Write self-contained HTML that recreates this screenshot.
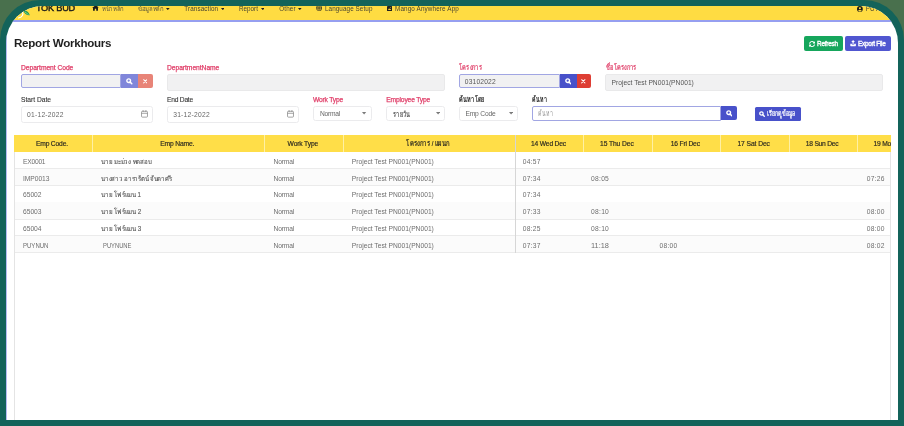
<!DOCTYPE html>
<html><head><meta charset="utf-8"><title>Report Workhours</title>
<style>
html,body{margin:0;padding:0;}
body{width:904px;height:426px;overflow:hidden;background:#49704d;font-family:"Liberation Sans",sans-serif;position:relative;}
#f{position:absolute;left:0;top:0;width:904px;height:426px;background:#13635a;border-radius:40px 40px 0 0;overflow:hidden}
#w{position:absolute;left:6px;top:5.75px;width:892px;height:414.25px;border-radius:37px 37px 0 0;overflow:hidden;background:#fff}
#r{will-change:transform;position:absolute;left:-6px;top:-5.75px;width:904px;height:426px;}
#r>div,#r>svg,.c>div,.c>svg{position:absolute;display:block}
.t{white-space:pre;}
svg text{font-family:"Liberation Sans",sans-serif;}
</style></head><body><div id="f"><div id="w"><div id="r">
<div style="left:0px;top:0px;width:904px;height:20.2px;background:#ffdc42"></div>
<div style="left:0px;top:19.9px;width:904px;height:2px;background:#969ff0"></div>
<svg style="left:14px;top:8px" width="18" height="12" viewBox="0 0 18 12"><path d="M9.5 2.5 C12 2 15 4 15.8 7.2 C13 7.6 10.2 5.8 9.5 2.5Z" fill="#1f9d55"/><path d="M11 4 L14.5 6.6" stroke="#d8f0c0" stroke-width="0.5" fill="none"/><path d="M8.3 3.8 C9.6 6 8.6 9.3 4.5 10" stroke="#fff" stroke-width="1.1" fill="none" stroke-linecap="round"/></svg>
<div class="t" style="left:35.90px;top:3px;font-size:9.2px;line-height:10px;color:#1a1a1a;letter-spacing:-0.232px;-webkit-text-stroke:0.4px #1a1a1a;">TOK BUD</div>
<svg style="left:92px;top:5.3px" width="7" height="5.8" viewBox="0 0 24 20"><path fill="#1a1a1a" d="M12 0.500L0.500 10.500H3.500V19.500H9.500V13H14.500V19.500H20.500V10.500H23.500L19 6.600V1.500H16V4Z"/></svg>
<svg role="img" aria-label="หน้าหลัก" style="left:101.60px;top:2.63px;overflow:visible" width="22.30" height="11.45" viewBox="0 -114.9 378.0 159.0" preserveAspectRatio="none"><text x="4" y="0" font-size="100" fill="#5e5738" textLength="366" lengthAdjust="spacingAndGlyphs">หน้าหลัก</text></svg>
<svg role="img" aria-label="ข้อมูลหลัก" style="left:138.00px;top:2.63px;overflow:visible" width="26.14" height="11.45" viewBox="0 -114.9 443.0 159.0" preserveAspectRatio="none"><text x="4" y="0" font-size="100" fill="#5e5738" textLength="431" lengthAdjust="spacingAndGlyphs">ข้อมูลหลัก</text></svg>
<svg style="left:166.00px;top:7.50px" width="3.6" height="2.16" viewBox="0 0 10 6"><path d="M0 0H10L5 6Z" fill="#222"/></svg>
<div class="t" style="left:184.30px;top:5px;font-size:6.3px;line-height:7px;color:#4a4530;letter-spacing:0.111px;">Transaction</div>
<svg style="left:220.70px;top:7.50px" width="3.6" height="2.16" viewBox="0 0 10 6"><path d="M0 0H10L5 6Z" fill="#222"/></svg>
<div class="t" style="left:239.00px;top:5px;font-size:6.3px;line-height:7px;color:#4a4530;letter-spacing:0.015px;">Report</div>
<svg style="left:260.90px;top:7.50px" width="3.6" height="2.16" viewBox="0 0 10 6"><path d="M0 0H10L5 6Z" fill="#222"/></svg>
<div class="t" style="left:279.20px;top:5px;font-size:6.3px;line-height:7px;color:#4a4530;letter-spacing:0.169px;">Other</div>
<svg style="left:298.20px;top:7.50px" width="3.6" height="2.16" viewBox="0 0 10 6"><path d="M0 0H10L5 6Z" fill="#222"/></svg>
<svg style="left:315.9px;top:5.2px" width="6.2" height="6.2" viewBox="0 0 20 20"><circle cx="10" cy="10" r="9.5" fill="#222"/><ellipse cx="10" cy="10" rx="4" ry="9" fill="none" stroke="#ffdc42" stroke-width="1.6"/><path d="M1 10H19M2.500 5.500H17.500M2.500 14.500H17.500" stroke="#ffdc42" stroke-width="1.500"/></svg>
<div class="t" style="left:325.00px;top:5px;font-size:6.3px;line-height:7px;color:#4a4530;letter-spacing:0.090px;">Language Setup</div>
<svg style="left:386.5px;top:5.6px" width="5.2" height="5.4" viewBox="0 0 20 20"><rect x="0" y="0" width="20" height="20" rx="3" fill="#222"/><path d="M4 15 L8 8 L11 12 L13 10 L16 15Z" fill="#ffdc42"/><circle cx="13" cy="6" r="1.800" fill="#ffdc42"/></svg>
<div class="t" style="left:395.00px;top:5px;font-size:6.3px;line-height:7px;color:#4a4530;letter-spacing:0.150px;">Mango Anywhere App</div>
<svg style="left:856.9px;top:5.8px" width="5.8" height="5.8" viewBox="0 0 20 20"><circle cx="10" cy="10" r="10" fill="#1c1c1c"/><circle cx="10" cy="7.500" r="3.600" fill="#ffdc42"/><path d="M3.500 16.500C5 12.500 15 12.500 16.500 16.500C14 19.500 6 19.500 3.500 16.500Z" fill="#ffdc42"/></svg>
<div class="t" style="left:865.70px;top:5px;font-size:6.3px;line-height:7px;color:#4a4530;">PUYNUN</div>
<div class="t" style="left:14.00px;top:36px;font-size:11.6px;line-height:13px;color:#1f1f1f;font-weight:700;letter-spacing:-0.270px;">Report Workhours</div>
<div style="left:804.1px;top:36px;width:38.8px;height:14.6px;background:#16a65c;border-radius:2px"></div>
<div style="left:845.2px;top:36px;width:45.6px;height:14.6px;background:#5056d0;border-radius:2px"></div>
<svg style="left:808.8px;top:40.5px" width="6.2" height="6.2" viewBox="0 0 512 512"><path fill="#fff" d="M370.700 133.300C339.500 104 298.900 88 255.800 88c-77.500.1-144.300 53.200-162.800 126.900-1.300 5.400-6.100 9.200-11.700 9.200H24.100c-7.500 0-13.200-6.800-11.800-14.200C33.900 94.900 134.800 8 256 8c66.400 0 126.800 26.100 171.300 68.700L463 41C478.100 25.900 504 36.600 504 57.900V192c0 13.300-10.700 24-24 24H345.900c-21.400 0-32.100-25.900-17-41l41.800-41.700zM32 296h134.100c21.400 0 32.100 25.900 17 41l-41.800 41.800c31.300 29.300 71.800 45.300 114.900 45.300 77.400-.1 144.300-53.100 162.800-126.800 1.300-5.400 6.100-9.200 11.700-9.200h57.300c7.500 0 13.200 6.800 11.800 14.200C478.100 417.100 377.200 504 256 504c-66.400 0-126.800-26.100-171.300-68.700L49 471c-15.100 15.100-41 4.400-41-16.900V320c0-13.300 10.700-24 24-24z"/></svg>
<div class="t" style="left:817.00px;top:40px;font-size:6.4px;line-height:7px;color:#fff;letter-spacing:-0.216px;-webkit-text-stroke:0.35px #fff;">Refresh</div>
<svg style="left:850px;top:40.4px" width="6.2" height="6.4" viewBox="0 0 20 20"><path fill="#fff" d="M10 0L4 6.500H8V12H12V6.500H16Z"/><path fill="#fff" d="M1 12H6V14H14V12H19V18.500a1.500 1.500 0 0 1-1.500 1.500H2.500a1.500 1.500 0 0 1-1.500-1.500Z"/></svg>
<div class="t" style="left:858.00px;top:40px;font-size:6.4px;line-height:7px;color:#fff;letter-spacing:-0.272px;-webkit-text-stroke:0.35px #fff;">Export File</div>
<div class="t" style="left:21.00px;top:64px;font-size:6.7px;line-height:7px;color:#e0406a;letter-spacing:-0.032px;-webkit-text-stroke:0.25px #e0406a;">Department Code</div>
<div class="t" style="left:167.00px;top:64px;font-size:6.7px;line-height:7px;color:#e0406a;letter-spacing:-0.034px;-webkit-text-stroke:0.25px #e0406a;">DepartmentName</div>
<svg role="img" aria-label="โครงการ" style="left:459.25px;top:60.74px;overflow:visible" width="23.30" height="12.40" viewBox="0 -114.9 395.0 159.0" preserveAspectRatio="none"><text x="2" y="0" font-size="100" fill="#e0406a" stroke="#e0406a" stroke-width="3" textLength="388" lengthAdjust="spacingAndGlyphs">โครงการ</text></svg>
<svg role="img" aria-label="ชื่อโครงการ" style="left:605.50px;top:60.74px;overflow:visible" width="30.86" height="12.40" viewBox="0 -114.9 523.0 159.0" preserveAspectRatio="none"><text x="4" y="0" font-size="100" fill="#e0406a" stroke="#e0406a" stroke-width="3" textLength="514" lengthAdjust="spacingAndGlyphs">ชื่อโครงการ</text></svg>
<div style="left:20.75px;top:74.4px;width:100.5px;height:14.05px;background:#f1f1f2;border:1px solid #a1a6e3;border-radius:2px 0 0 2px;box-sizing:border-box"></div>
<div style="left:121.25px;top:74.4px;width:16.75px;height:14.05px;background:#8086da"></div>
<div style="left:138px;top:74.4px;width:14.8px;height:14.05px;background:#e88478;border-radius:0 2px 2px 0"></div>
<svg style="left:126.10px;top:78.10px" width="6.6" height="6.6" viewBox="0 0 20 20"><circle cx="8.200" cy="8.200" r="5.600" fill="none" stroke="#fff" stroke-width="4.200"/><path d="M12.600 12.600L17.600 17.600" stroke="#fff" stroke-width="4.600" stroke-linecap="round"/></svg>
<svg style="left:142.90px;top:79.10px" width="4.6" height="4.6" viewBox="0 0 10 10"><path d="M1.500 1.500L8.500 8.500M8.500 1.500L1.500 8.500" stroke="#fff" stroke-width="2.200" stroke-linecap="round"/></svg>
<div style="left:167px;top:74.4px;width:277.5px;height:16.2px;background:#f1f1f2;border:1px solid #e9e9ea;border-radius:2px;box-sizing:border-box"></div>
<div style="left:459.25px;top:74.4px;width:100.85px;height:14.05px;background:#f1f1f2;border:1px solid #a1a6e3;border-radius:2px 0 0 2px;box-sizing:border-box"></div>
<div class="t" style="left:464.80px;top:78px;font-size:6.7px;line-height:7px;color:#555;letter-spacing:0.161px;">03102022</div>
<div style="left:560.1px;top:74.4px;width:16.6px;height:14.05px;background:#4851ca"></div>
<div style="left:576.7px;top:74.4px;width:14.2px;height:14.05px;background:#de3e34;border-radius:0 2px 2px 0"></div>
<svg style="left:564.90px;top:78.10px" width="6.6" height="6.6" viewBox="0 0 20 20"><circle cx="8.200" cy="8.200" r="5.600" fill="none" stroke="#fff" stroke-width="4.200"/><path d="M12.600 12.600L17.600 17.600" stroke="#fff" stroke-width="4.600" stroke-linecap="round"/></svg>
<svg style="left:581.10px;top:79.10px" width="4.6" height="4.6" viewBox="0 0 10 10"><path d="M1.500 1.500L8.500 8.500M8.500 1.500L1.500 8.500" stroke="#fff" stroke-width="2.200" stroke-linecap="round"/></svg>
<div style="left:605.3px;top:74.4px;width:278.2px;height:16.2px;background:#f1f1f2;border:1px solid #e9e9ea;border-radius:2px;box-sizing:border-box"></div>
<div class="t" style="left:611.60px;top:79px;font-size:6.7px;line-height:7px;color:#555;letter-spacing:0.009px;">Project Test PN001(PN001)</div>
<div class="t" style="left:21.00px;top:96px;font-size:6.7px;line-height:7px;color:#333;letter-spacing:-0.016px;-webkit-text-stroke:0.1px #333;">Start Date</div>
<div class="t" style="left:167.00px;top:96px;font-size:6.7px;line-height:7px;color:#333;letter-spacing:-0.242px;-webkit-text-stroke:0.1px #333;">End Date</div>
<div class="t" style="left:313.00px;top:96px;font-size:6.7px;line-height:7px;color:#e0406a;letter-spacing:-0.197px;-webkit-text-stroke:0.25px #e0406a;">Work Type</div>
<div class="t" style="left:386.25px;top:96px;font-size:6.7px;line-height:7px;color:#e0406a;letter-spacing:-0.159px;-webkit-text-stroke:0.25px #e0406a;">Employee Type</div>
<svg role="img" aria-label="ค้นหาโดย" style="left:459.25px;top:92.64px;overflow:visible" width="25.66" height="12.40" viewBox="0 -114.9 435.0 159.0" preserveAspectRatio="none"><text x="6" y="0" font-size="100" fill="#222" stroke="#222" stroke-width="3" textLength="422" lengthAdjust="spacingAndGlyphs">ค้นหาโดย</text></svg>
<svg role="img" aria-label="ค้นหา" style="left:532.00px;top:92.64px;overflow:visible" width="15.16" height="12.40" viewBox="0 -114.9 257.0 159.0" preserveAspectRatio="none"><text x="6" y="0" font-size="100" fill="#222" stroke="#222" stroke-width="3" textLength="243" lengthAdjust="spacingAndGlyphs">ค้นหา</text></svg>
<div style="left:20.75px;top:106.3px;width:132px;height:16.3px;background:#fff;border:1px solid #ebebed;border-radius:2.500px;box-sizing:border-box"></div>
<div class="t" style="left:27.00px;top:111px;font-size:6.7px;line-height:7px;color:#666;letter-spacing:0.248px;">01-12-2022</div>
<svg style="left:141.2px;top:110.3px" width="7" height="7.7" viewBox="0 0 20 21" preserveAspectRatio="none"><rect x="1.500" y="3.500" width="17" height="16" rx="2.500" fill="none" stroke="#808080" stroke-width="2"/><path d="M1.500 9H18.500M6 0.500V5M14 0.500V5" stroke="#808080" stroke-width="2"/></svg>
<div style="left:167px;top:106.3px;width:132px;height:16.3px;background:#fff;border:1px solid #ebebed;border-radius:2.500px;box-sizing:border-box"></div>
<div class="t" style="left:173.20px;top:111px;font-size:6.7px;line-height:7px;color:#666;letter-spacing:0.248px;">31-12-2022</div>
<svg style="left:287.4px;top:110.3px" width="7" height="7.7" viewBox="0 0 20 21" preserveAspectRatio="none"><rect x="1.500" y="3.500" width="17" height="16" rx="2.500" fill="none" stroke="#808080" stroke-width="2"/><path d="M1.500 9H18.500M6 0.500V5M14 0.500V5" stroke="#808080" stroke-width="2"/></svg>
<div style="left:313px;top:106.25px;width:59px;height:14.5px;background:#fff;border:1px solid #ebebed;border-radius:2.500px;box-sizing:border-box"></div>
<div class="t" style="left:320.00px;top:110px;font-size:6.7px;line-height:7px;color:#666;letter-spacing:-0.265px;">Normal</div>
<svg style="left:362.40px;top:112.30px" width="4.2" height="2.52" viewBox="0 0 10 6"><path d="M0 0H10L5 6Z" fill="#7a7a7a"/></svg>
<div style="left:386.25px;top:106.25px;width:58.75px;height:14.5px;background:#fff;border:1px solid #ebebed;border-radius:2.500px;box-sizing:border-box"></div>
<svg role="img" aria-label="รายวัน" style="left:392.60px;top:107.64px;overflow:visible" width="17.29" height="12.40" viewBox="0 -114.9 293.0 159.0" preserveAspectRatio="none"><text x="4" y="0" font-size="100" fill="#4a4a4a" stroke="#4a4a4a" stroke-width="2" textLength="286" lengthAdjust="spacingAndGlyphs">รายวัน</text></svg>
<svg style="left:435.60px;top:112.30px" width="4.2" height="2.52" viewBox="0 0 10 6"><path d="M0 0H10L5 6Z" fill="#7a7a7a"/></svg>
<div style="left:459.25px;top:106.25px;width:58.75px;height:14.5px;background:#fff;border:1px solid #ebebed;border-radius:2.500px;box-sizing:border-box"></div>
<div class="t" style="left:465.50px;top:110px;font-size:6.7px;line-height:7px;color:#666;letter-spacing:-0.207px;">Emp Code</div>
<svg style="left:508.60px;top:112.30px" width="4.2" height="2.52" viewBox="0 0 10 6"><path d="M0 0H10L5 6Z" fill="#7a7a7a"/></svg>
<div style="left:532px;top:106.25px;width:189px;height:14.25px;background:#fff;border:1px solid #a1a6e3;border-radius:2px 0 0 2px;box-sizing:border-box"></div>
<svg role="img" aria-label="ค้นหา" style="left:538.00px;top:107.24px;overflow:visible" width="15.16" height="12.40" viewBox="0 -114.9 257.0 159.0" preserveAspectRatio="none"><text x="6" y="0" font-size="100" fill="#999" textLength="243" lengthAdjust="spacingAndGlyphs">ค้นหา</text></svg>
<div style="left:720.75px;top:106.25px;width:16.2px;height:14.1px;background:#4851ca;border-radius:0 2px 2px 0"></div>
<svg style="left:725.80px;top:110.10px" width="6.6" height="6.6" viewBox="0 0 20 20"><circle cx="8.200" cy="8.200" r="5.600" fill="none" stroke="#fff" stroke-width="4.200"/><path d="M12.600 12.600L17.600 17.600" stroke="#fff" stroke-width="4.600" stroke-linecap="round"/></svg>
<div style="left:754.7px;top:106.5px;width:46.2px;height:14.3px;background:#4851ca;border-radius:1.500px"></div>
<svg style="left:759.20px;top:110.50px" width="6" height="6" viewBox="0 0 20 20"><circle cx="8.200" cy="8.200" r="5.600" fill="none" stroke="#fff" stroke-width="4.200"/><path d="M12.600 12.600L17.600 17.600" stroke="#fff" stroke-width="4.600" stroke-linecap="round"/></svg>
<svg role="img" aria-label="เรียกดูข้อมูล" style="left:767.25px;top:106.84px;overflow:visible" width="28.70" height="12.40" viewBox="0 -114.9 528.0 159.0" preserveAspectRatio="none"><text x="6" y="0" font-size="100" fill="#fff" stroke="#fff" stroke-width="3" textLength="514" lengthAdjust="spacingAndGlyphs">เรียกดูข้อมูล</text></svg>
<div class="c" style="left:0;top:0;width:891px;height:426px;overflow:hidden"><div style="left:14px;top:135.2px;width:877px;height:16.8px;background:#ffde48"></div>
<div style="left:92.2px;top:135.2px;width:1px;height:16.8px;background:#fff0a4"></div>
<div style="left:263.75px;top:135.2px;width:1px;height:16.8px;background:#fff0a4"></div>
<div style="left:343.0px;top:135.2px;width:1px;height:16.8px;background:#fff0a4"></div>
<div style="left:583.4px;top:135.2px;width:1px;height:16.8px;background:#fff0a4"></div>
<div style="left:651.8px;top:135.2px;width:1px;height:16.8px;background:#fff0a4"></div>
<div style="left:720.2px;top:135.2px;width:1px;height:16.8px;background:#fff0a4"></div>
<div style="left:788.6px;top:135.2px;width:1px;height:16.8px;background:#fff0a4"></div>
<div style="left:857.0px;top:135.2px;width:1px;height:16.8px;background:#fff0a4"></div>
<div class="t" style="left:35.95px;top:140px;font-size:6.7px;line-height:7px;color:#2f2c20;letter-spacing:-0.169px;-webkit-text-stroke:0.18px #2f2c20;">Emp Code.</div>
<div class="t" style="left:160.28px;top:140px;font-size:6.7px;line-height:7px;color:#2f2c20;letter-spacing:-0.152px;-webkit-text-stroke:0.18px #2f2c20;">Emp Name.</div>
<div class="t" style="left:287.62px;top:140px;font-size:6.7px;line-height:7px;color:#2f2c20;letter-spacing:-0.142px;-webkit-text-stroke:0.18px #2f2c20;">Work Type</div>
<svg role="img" aria-label="โครงการ / แผนก" style="left:405.65px;top:136.84px;overflow:visible" width="43.90" height="12.40" viewBox="0 -114.9 744.0 159.0" preserveAspectRatio="none"><text x="2" y="0" font-size="100" fill="#2f2c20" stroke="#2f2c20" stroke-width="3" textLength="734" lengthAdjust="spacingAndGlyphs">โครงการ / แผนก</text></svg>
<div class="t" style="left:531.05px;top:140px;font-size:6.7px;line-height:7px;color:#2f2c20;letter-spacing:-0.175px;-webkit-text-stroke:0.18px #2f2c20;">14 Wed Dec</div>
<div class="t" style="left:600.10px;top:140px;font-size:6.7px;line-height:7px;color:#2f2c20;letter-spacing:-0.091px;-webkit-text-stroke:0.18px #2f2c20;">15 Thu Dec</div>
<div class="t" style="left:670.70px;top:140px;font-size:6.7px;line-height:7px;color:#2f2c20;letter-spacing:-0.170px;-webkit-text-stroke:0.18px #2f2c20;">16 Fri Dec</div>
<div class="t" style="left:737.45px;top:140px;font-size:6.7px;line-height:7px;color:#2f2c20;letter-spacing:-0.065px;-webkit-text-stroke:0.18px #2f2c20;">17 Sat Dec</div>
<div class="t" style="left:805.85px;top:140px;font-size:6.7px;line-height:7px;color:#2f2c20;letter-spacing:-0.251px;-webkit-text-stroke:0.18px #2f2c20;">18 Sun Dec</div>
<div class="t" style="left:873.50px;top:140px;font-size:6.7px;line-height:7px;color:#2f2c20;letter-spacing:-0.212px;-webkit-text-stroke:0.18px #2f2c20;">19 Mon Dec</div>
<div style="left:14px;top:168.35px;width:877px;height:1px;background:#ebebeb"></div>
<div class="t" style="left:23.00px;top:158px;font-size:6.7px;line-height:7px;color:#6e6e6e;letter-spacing:-0.241px;">EX0001</div>
<svg role="img" aria-label="นาย มะม่วง ทดสอบ" style="left:100.80px;top:155.54px;overflow:visible" width="50.73" height="11.29" viewBox="0 -114.9 857.0 159.0" preserveAspectRatio="none"><text x="5" y="0" font-size="100" fill="#5a5a5a" stroke="#5a5a5a" stroke-width="2" textLength="845" lengthAdjust="spacingAndGlyphs">นาย มะม่วง ทดสอบ</text></svg>
<div class="t" style="left:273.50px;top:158px;font-size:6.7px;line-height:7px;color:#6e6e6e;letter-spacing:-0.140px;">Normal</div>
<div class="t" style="left:351.75px;top:158px;font-size:6.7px;line-height:7px;color:#6e6e6e;letter-spacing:0.003px;">Project Test PN001(PN001)</div>
<div class="t" style="left:522.80px;top:158px;font-size:6.7px;line-height:7px;color:#6e6e6e;letter-spacing:0.247px;">04:57</div>
<div style="left:14px;top:168.85px;width:877px;height:16.75px;background:#fbfbfb"></div>
<div style="left:14px;top:185.1px;width:877px;height:1px;background:#ebebeb"></div>
<div class="t" style="left:23.00px;top:175px;font-size:6.7px;line-height:7px;color:#6e6e6e;letter-spacing:-0.045px;">IMP0013</div>
<svg role="img" aria-label="นางสาว อารารัตน์ จันดาศรี" style="left:100.80px;top:172.54px;overflow:visible" width="70.57" height="11.29" viewBox="0 -114.9 1192.0 159.0" preserveAspectRatio="none"><text x="5" y="0" font-size="100" fill="#5a5a5a" stroke="#5a5a5a" stroke-width="2" textLength="1183" lengthAdjust="spacingAndGlyphs">นางสาว อารารัตน์ จันดาศรี</text></svg>
<div class="t" style="left:273.50px;top:175px;font-size:6.7px;line-height:7px;color:#6e6e6e;letter-spacing:-0.140px;">Normal</div>
<div class="t" style="left:351.75px;top:175px;font-size:6.7px;line-height:7px;color:#6e6e6e;letter-spacing:0.003px;">Project Test PN001(PN001)</div>
<div class="t" style="left:522.80px;top:175px;font-size:6.7px;line-height:7px;color:#6e6e6e;letter-spacing:0.247px;">07:34</div>
<div class="t" style="left:591.10px;top:175px;font-size:6.7px;line-height:7px;color:#6e6e6e;letter-spacing:0.247px;">08:05</div>
<div class="t" style="left:866.70px;top:175px;font-size:6.7px;line-height:7px;color:#6e6e6e;letter-spacing:0.247px;">07:26</div>
<div style="left:14px;top:201.85px;width:877px;height:1px;background:#ebebeb"></div>
<div class="t" style="left:23.00px;top:191px;font-size:6.7px;line-height:7px;color:#6e6e6e;letter-spacing:-0.026px;">65002</div>
<svg role="img" aria-label="นาย โฟร์แมน 1" style="left:100.80px;top:188.54px;overflow:visible" width="40.49" height="11.29" viewBox="0 -114.9 684.0 159.0" preserveAspectRatio="none"><text x="5" y="0" font-size="100" fill="#5a5a5a" stroke="#5a5a5a" stroke-width="2" textLength="668" lengthAdjust="spacingAndGlyphs">นาย โฟร์แมน 1</text></svg>
<div class="t" style="left:273.50px;top:191px;font-size:6.7px;line-height:7px;color:#6e6e6e;letter-spacing:-0.140px;">Normal</div>
<div class="t" style="left:351.75px;top:191px;font-size:6.7px;line-height:7px;color:#6e6e6e;letter-spacing:0.003px;">Project Test PN001(PN001)</div>
<div class="t" style="left:522.80px;top:191px;font-size:6.7px;line-height:7px;color:#6e6e6e;letter-spacing:0.247px;">07:34</div>
<div style="left:14px;top:202.35px;width:877px;height:16.75px;background:#fbfbfb"></div>
<div style="left:14px;top:218.6px;width:877px;height:1px;background:#ebebeb"></div>
<div class="t" style="left:23.00px;top:208px;font-size:6.7px;line-height:7px;color:#6e6e6e;letter-spacing:-0.026px;">65003</div>
<svg role="img" aria-label="นาย โฟร์แมน 2" style="left:100.80px;top:205.54px;overflow:visible" width="40.49" height="11.29" viewBox="0 -114.9 684.0 159.0" preserveAspectRatio="none"><text x="5" y="0" font-size="100" fill="#5a5a5a" stroke="#5a5a5a" stroke-width="2" textLength="673" lengthAdjust="spacingAndGlyphs">นาย โฟร์แมน 2</text></svg>
<div class="t" style="left:273.50px;top:208px;font-size:6.7px;line-height:7px;color:#6e6e6e;letter-spacing:-0.140px;">Normal</div>
<div class="t" style="left:351.75px;top:208px;font-size:6.7px;line-height:7px;color:#6e6e6e;letter-spacing:0.003px;">Project Test PN001(PN001)</div>
<div class="t" style="left:522.80px;top:208px;font-size:6.7px;line-height:7px;color:#6e6e6e;letter-spacing:0.247px;">07:33</div>
<div class="t" style="left:591.10px;top:208px;font-size:6.7px;line-height:7px;color:#6e6e6e;letter-spacing:0.247px;">08:10</div>
<div class="t" style="left:866.70px;top:208px;font-size:6.7px;line-height:7px;color:#6e6e6e;letter-spacing:0.247px;">08:00</div>
<div style="left:14px;top:235.35px;width:877px;height:1px;background:#ebebeb"></div>
<div class="t" style="left:23.00px;top:225px;font-size:6.7px;line-height:7px;color:#6e6e6e;letter-spacing:-0.026px;">65004</div>
<svg role="img" aria-label="นาย โฟร์แมน 3" style="left:100.80px;top:222.54px;overflow:visible" width="40.49" height="11.29" viewBox="0 -114.9 684.0 159.0" preserveAspectRatio="none"><text x="5" y="0" font-size="100" fill="#5a5a5a" stroke="#5a5a5a" stroke-width="2" textLength="674" lengthAdjust="spacingAndGlyphs">นาย โฟร์แมน 3</text></svg>
<div class="t" style="left:273.50px;top:225px;font-size:6.7px;line-height:7px;color:#6e6e6e;letter-spacing:-0.140px;">Normal</div>
<div class="t" style="left:351.75px;top:225px;font-size:6.7px;line-height:7px;color:#6e6e6e;letter-spacing:0.003px;">Project Test PN001(PN001)</div>
<div class="t" style="left:522.80px;top:225px;font-size:6.7px;line-height:7px;color:#6e6e6e;letter-spacing:0.247px;">08:25</div>
<div class="t" style="left:591.10px;top:225px;font-size:6.7px;line-height:7px;color:#6e6e6e;letter-spacing:0.247px;">08:10</div>
<div class="t" style="left:866.70px;top:225px;font-size:6.7px;line-height:7px;color:#6e6e6e;letter-spacing:0.247px;">08:00</div>
<div style="left:14px;top:235.85px;width:877px;height:16.75px;background:#fbfbfb"></div>
<div style="left:14px;top:252.1px;width:877px;height:1px;background:#ebebeb"></div>
<div class="t" style="left:23.00px;top:242px;font-size:6.7px;line-height:7px;color:#6e6e6e;transform-origin:0 0;transform:scaleX(0.9013);">PUYNUN</div>
<div class="t" style="left:103.00px;top:242px;font-size:6.7px;line-height:7px;color:#6e6e6e;transform-origin:0 0;transform:scaleX(0.8699);">PUYNUNE</div>
<div class="t" style="left:273.50px;top:242px;font-size:6.7px;line-height:7px;color:#6e6e6e;letter-spacing:-0.140px;">Normal</div>
<div class="t" style="left:351.75px;top:242px;font-size:6.7px;line-height:7px;color:#6e6e6e;letter-spacing:0.003px;">Project Test PN001(PN001)</div>
<div class="t" style="left:522.80px;top:242px;font-size:6.7px;line-height:7px;color:#6e6e6e;letter-spacing:0.247px;">07:37</div>
<div class="t" style="left:591.10px;top:242px;font-size:6.7px;line-height:7px;color:#6e6e6e;transform-origin:0 0;transform:scaleX(1.1064);">11:18</div>
<div class="t" style="left:659.50px;top:242px;font-size:6.7px;line-height:7px;color:#6e6e6e;letter-spacing:0.247px;">08:00</div>
<div class="t" style="left:866.70px;top:242px;font-size:6.7px;line-height:7px;color:#6e6e6e;letter-spacing:0.247px;">08:02</div>
<div style="left:13.5px;top:152px;width:877px;height:268.5px;border:1px solid #e4e4e4;border-top:none;border-bottom:none;box-sizing:border-box"></div>
<div style="left:515.2px;top:135.2px;width:1px;height:117.4px;background:#d6d6d6"></div></div>
<div style="left:5.8px;top:21px;width:1px;height:399px;background:#969ff0;opacity:.7"></div>
</div></div></div></body></html>
